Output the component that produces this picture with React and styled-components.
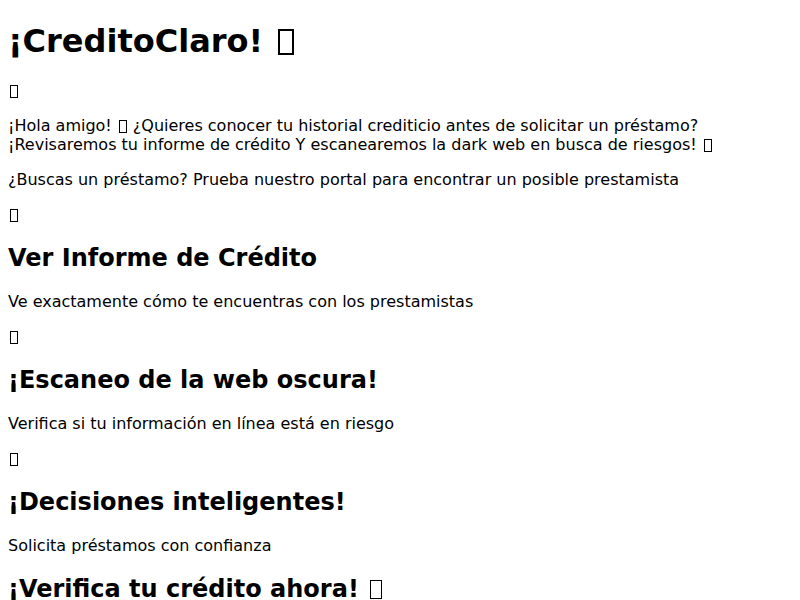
import React from 'react'
import styled, {createGlobalStyle} from 'styled-components'

const GlobalStyle = createGlobalStyle`
    body {
        margin: 8px;
        background: #fff;
        color: #000;
        font-family: "DejaVu Sans", sans-serif;
    }
`
const Page = styled.div``

const Title = styled.h1`
    font-size: 32px;
    margin: 14px 0 21.44px;
`
// empty glyph box, the way a missing emoji shows up
const Glyph = styled.span`
    display: inline-block;
    box-sizing: border-box;
    width: 0.5em;
    height: 0.81em;
    border: 0.0625em solid #000;
    margin: 0 0.06em 0 ${(p) => (p.$lead ? '0.12em' : '0')};
    vertical-align: -0.1em;
`
const Icon = styled.p`
    margin: 16px 0;
`
const Intro = styled.p`
    margin: 16px 0;
`
const FeatureTitle = styled.h2`
    font-size: 24px;
    margin: 19.92px 0;
`
const FeatureText = styled.p`
    margin: 16px 0;
`

const features = [
    {title: 'Ver Informe de Crédito', text: 'Ve exactamente cómo te encuentras con los prestamistas'},
    {title: '¡Escaneo de la web oscura!', text: 'Verifica si tu información en línea está en riesgo'},
    {title: '¡Decisiones inteligentes!', text: 'Solicita préstamos con confianza'},
]

const App = () => {
    return (
        <Page>
            <GlobalStyle />
            <Title>¡CreditoClaro! <Glyph $lead /></Title>
            <Icon><Glyph $lead /></Icon>
            <Intro>
                ¡Hola amigo! <Glyph $lead /> ¿Quieres conocer tu historial crediticio antes de solicitar un préstamo? ¡Revisaremos tu informe de crédito Y escanearemos la dark web en busca de riesgos! <Glyph $lead />
            </Intro>
            <Intro>¿Buscas un préstamo? Prueba nuestro portal para encontrar un posible prestamista</Intro>
            {features.map((f) => (
                <div key={f.title}>
                    <Icon><Glyph $lead /></Icon>
                    <FeatureTitle>{f.title}</FeatureTitle>
                    <FeatureText>{f.text}</FeatureText>
                </div>
            ))}
            <FeatureTitle>¡Verifica tu crédito ahora! <Glyph $lead /></FeatureTitle>
        </Page>
    )
}

export default App
